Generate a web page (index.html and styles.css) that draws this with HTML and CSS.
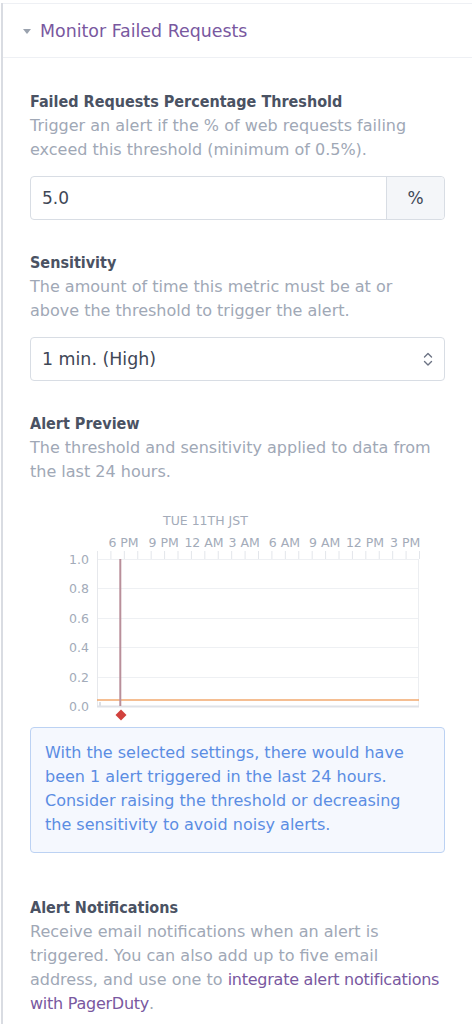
FILE: index.html
```html
<!DOCTYPE html>
<html>
<head>
<meta charset="utf-8">
<link rel="stylesheet" href="styles.css">
</head>
<body>
<div class="page">
  <div class="section-header">
    <span class="caret"></span>
    <span class="section-title">Monitor Failed Requests</span>
  </div>
  <div class="content">
    <div class="field">
      <div class="label">Failed Requests Percentage Threshold</div>
      <div class="help">Trigger an alert if the % of web requests failing exceed this threshold (minimum of 0.5%).</div>
      <div class="input-group">
        <div class="input">5.0</div>
        <div class="addon">%</div>
      </div>
    </div>
    <div class="field">
      <div class="label">Sensitivity</div>
      <div class="help">The amount of time this metric must be at or above the threshold to trigger the alert.</div>
      <div class="select">
        <span>1 min. (High)</span>
        <svg class="chev" width="10" height="16" viewBox="0 0 10 16"><path d="M1.5 6 L5 2.5 L8.5 6" fill="none" stroke="#6c7384" stroke-width="1.4" stroke-linecap="round" stroke-linejoin="round"/><path d="M1.5 10.5 L5 14 L8.5 10.5" fill="none" stroke="#6c7384" stroke-width="1.4" stroke-linecap="round" stroke-linejoin="round"/></svg>
      </div>
    </div>
    <div class="field">
      <div class="label">Alert Preview</div>
      <div class="help">The threshold and sensitivity applied to data from the last 24 hours.</div>
      <svg class="chart" width="415" height="220" viewBox="0 0 415 220" id="chart">
        <text x="133" y="17.5" class="axis-title">TUE 11TH JST</text>
        <g class="xlabels">
          <text x="93.5" y="39.5">6 PM</text>
          <text x="133.7" y="39.5">9 PM</text>
          <text x="174" y="39.5">12 AM</text>
          <text x="214.2" y="39.5">3 AM</text>
          <text x="254.5" y="39.5">6 AM</text>
          <text x="294.7" y="39.5">9 AM</text>
          <text x="335" y="39.5">12 PM</text>
          <text x="375.2" y="39.5">3 PM</text>
        </g>
        <g id="ticks" stroke="#e3e6eb" stroke-width="1"></g>
        <g stroke="#eef0f3" stroke-width="1">
          <line x1="67" y1="52.5" x2="389" y2="52.5"/>
          <line x1="67" y1="81.5" x2="389" y2="81.5"/>
          <line x1="67" y1="111.5" x2="389" y2="111.5"/>
          <line x1="67" y1="140.5" x2="389" y2="140.5"/>
          <line x1="67" y1="170.5" x2="389" y2="170.5"/>
        </g>
        <line x1="67.5" y1="44" x2="67.5" y2="199" stroke="#e6e8ec" stroke-width="1"/>
        <line x1="388.5" y1="52" x2="388.5" y2="199" stroke="#eceef1" stroke-width="1"/>
        <g class="ylabels">
          <text x="59" y="56.5">1.0</text>
          <text x="59" y="86">0.8</text>
          <text x="59" y="115.5">0.6</text>
          <text x="59" y="145">0.4</text>
          <text x="59" y="174.5">0.2</text>
          <text x="59" y="203.5">0.0</text>
        </g>
        <rect x="69" y="195" width="2" height="4" fill="#dcdfe4"/>
        <line x1="67" y1="193" x2="389" y2="193" stroke="#f2a96e" stroke-width="1.5"/>
        <line x1="67" y1="199.5" x2="389" y2="199.5" stroke="#dfe2e7" stroke-width="2"/>
        <line x1="90.3" y1="52" x2="90.3" y2="199" stroke="#b98f9a" stroke-width="2"/>
        <path d="M91 202.5 L96.5 208 L91 213.5 L85.5 208 Z" fill="#d1413d"/>
      </svg>
      <div class="alert-box">With the selected settings, there would have been 1 alert triggered in the last 24 hours. Consider raising the threshold or decreasing the sensitivity to avoid noisy alerts.</div>
    </div>
    <div class="field notifications">
      <div class="label">Alert Notifications</div>
      <div class="help">Receive email notifications when an alert is triggered. You can also add up to five email address, and use one to <span class="link">integrate alert notifications with PagerDuty</span>.</div>
    </div>
  </div>
</div>
<script>
  var g = document.getElementById('ticks');
  for (var k = 0; k <= 24; k++) {
    var x = 67.5 + k * 13.417;
    var l = document.createElementNS('http://www.w3.org/2000/svg', 'line');
    l.setAttribute('x1', x); l.setAttribute('x2', x);
    l.setAttribute('y1', 44); l.setAttribute('y2', 52);
    g.appendChild(l);
  }
</script>
</body>
</html>
```

FILE: styles.css
```css
html, body {
  margin: 0;
  padding: 0;
  background: #ffffff;
}
body {
  font-family: "DejaVu Sans", "Open Sans", sans-serif;
  font-size: 16px;
  line-height: 24px;
  color: #464e5d;
}
.page {
  margin-left: 1px;
  border-left: 2px solid #d9dce2;
  min-height: 1024px;
}
.section-header {
  margin-top: 3px;
  border-top: 1px solid #eef0f4;
  border-bottom: 1px solid #eef0f4;
  height: 53px;
  display: flex;
  align-items: center;
  padding-left: 20px;
}
.caret {
  width: 0;
  height: 0;
  border-left: 4px solid transparent;
  border-right: 4px solid transparent;
  border-top: 5px solid #9aa2ae;
  margin-right: 9px;
  margin-top: 1px;
}
.section-title {
  font-size: 17.4px;
  color: #79589f;
}
.content {
  padding: 32px 27px 0 27px;
}
.field {
  margin-bottom: 31px;
}
.label {
  font-family: "DejaVu Sans Condensed", "DejaVu Sans", "Open Sans", sans-serif;
  font-stretch: condensed;
  font-weight: bold;
  color: #4a5263;
}
.help {
  color: #a0a8b6;
}
.input-group {
  margin-top: 14px;
  display: flex;
  height: 42px;
  border: 1px solid #d8dde4;
  border-radius: 4px;
}
.input {
  flex: 1;
  display: flex;
  align-items: center;
  padding-left: 11px;
  font-size: 17px;
  color: #3f4756;
}
.addon {
  width: 57px;
  display: flex;
  align-items: center;
  justify-content: center;
  background: #f4f6f9;
  border-left: 1px solid #d8dde4;
  border-radius: 0 4px 4px 0;
  font-size: 17px;
  color: #3f4756;
}
.select {
  margin-top: 14px;
  height: 42px;
  border: 1px solid #d8dde4;
  border-radius: 4px;
  display: flex;
  align-items: center;
  justify-content: space-between;
  padding: 0 11px 0 11px;
  font-size: 17.4px;
  color: #3f4756;
}
.chev {
  display: block;
}
.chart {
  display: block;
  margin-top: 23px;
}
.chart text {
  font-family: "DejaVu Sans", "Open Sans", sans-serif;
  font-size: 12.5px;
  fill: #a3abb9;
}
.chart .xlabels text {
  text-anchor: middle;
}
.chart .ylabels text {
  text-anchor: end;
}
.alert-box {
  background: #f5f8fe;
  border: 1px solid #bcd2f3;
  border-radius: 4px;
  padding: 13px 14px 15px 14px;
  color: #5b8de3;
}
.notifications {
  margin-top: 43px;
}
.link {
  color: #79589f;
  letter-spacing: -0.25px;
}
```
